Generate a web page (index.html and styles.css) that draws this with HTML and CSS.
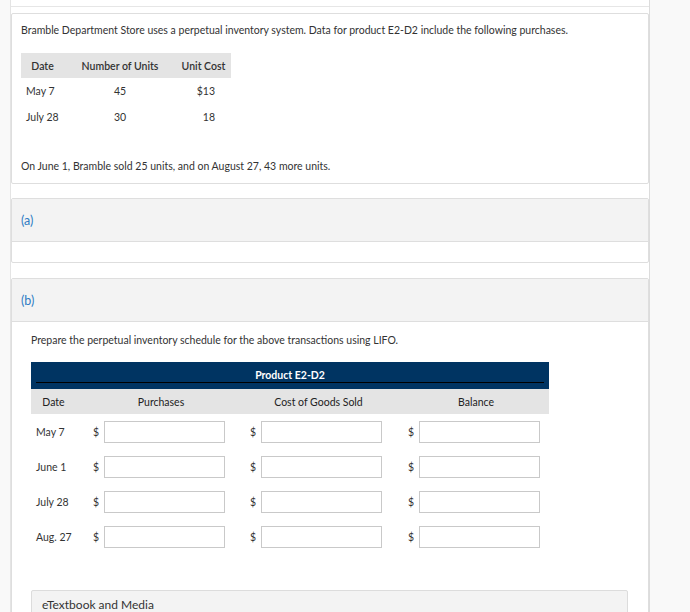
FILE: index.html
```html
<!DOCTYPE html>
<html lang="en">
<head>
<meta charset="utf-8">
<title>Bramble Department Store</title>
<link rel="stylesheet" href="styles.css">
</head>
<body>
<div class="page">
  <div class="topline"></div>

  <div class="card intro">
    <p class="lead">Bramble Department Store uses a perpetual inventory system. Data for product E2-D2 include the following purchases.</p>
    <table class="data">
      <colgroup><col class="w1"><col class="w2"><col class="w3"></colgroup>
      <thead>
        <tr><th class="c-date">Date</th><th class="c-units">Number of Units</th><th class="c-cost">Unit Cost</th></tr>
      </thead>
      <tbody>
        <tr><td class="c-date">May 7</td><td class="c-units">45</td><td class="c-cost">$13</td></tr>
        <tr><td class="c-date">July 28</td><td class="c-units">30</td><td class="c-cost">18</td></tr>
      </tbody>
    </table>
    <p class="note">On June 1, Bramble sold 25 units, and on August 27, 43 more units.</p>
  </div>

  <div class="card part part-a">
    <div class="part-head"><span class="part-label">(a)</span></div>
    <div class="part-body empty"></div>
  </div>

  <div class="card part part-b">
    <div class="part-head"><span class="part-label">(b)</span></div>
    <div class="part-body">
      <p class="prompt">Prepare the perpetual inventory schedule for the above transactions using LIFO.</p>
      <table class="schedule">
        <colgroup>
          <col class="w-date"><col class="w-purch"><col class="w-cogs"><col class="w-bal">
        </colgroup>
        <thead>
          <tr class="title-row"><th colspan="4"><div class="title-inner">Product E2-D2</div></th></tr>
          <tr class="col-row">
            <th class="h-date">Date</th>
            <th class="h-purch">Purchases</th>
            <th class="h-cogs">Cost of Goods Sold</th>
            <th class="h-bal">Balance</th>
          </tr>
        </thead>
        <tbody>
          <tr>
            <td class="d-date">May 7</td>
            <td><div class="money"><span class="cur">$</span><input class="amt" type="text"></div></td>
            <td><div class="money"><span class="cur">$</span><input class="amt" type="text"></div></td>
            <td><div class="money"><span class="cur">$</span><input class="amt" type="text"></div></td>
          </tr>
          <tr>
            <td class="d-date">June 1</td>
            <td><div class="money"><span class="cur">$</span><input class="amt" type="text"></div></td>
            <td><div class="money"><span class="cur">$</span><input class="amt" type="text"></div></td>
            <td><div class="money"><span class="cur">$</span><input class="amt" type="text"></div></td>
          </tr>
          <tr>
            <td class="d-date">July 28</td>
            <td><div class="money"><span class="cur">$</span><input class="amt" type="text"></div></td>
            <td><div class="money"><span class="cur">$</span><input class="amt" type="text"></div></td>
            <td><div class="money"><span class="cur">$</span><input class="amt" type="text"></div></td>
          </tr>
          <tr>
            <td class="d-date">Aug. 27</td>
            <td><div class="money"><span class="cur">$</span><input class="amt" type="text"></div></td>
            <td><div class="money"><span class="cur">$</span><input class="amt" type="text"></div></td>
            <td><div class="money"><span class="cur">$</span><input class="amt" type="text"></div></td>
          </tr>
        </tbody>
      </table>
      <div class="media">eTextbook and Media</div>
    </div>
  </div>
</div>
</body>
</html>
```

FILE: styles.css
```css
html, body {
  margin: 0;
  padding: 0;
}
body {
  background: #f9f9f9;
  font-family: Lato, "Open Sans", "Liberation Sans", sans-serif;
  font-size: 10.5px;
  line-height: 14px;
  color: #333;
  overflow: hidden;
}
.page {
  margin-left: 10px;
  width: 640px;
  min-height: 612px;
  box-sizing: border-box;
  background: #fff;
  border-left: 1px solid #e4e4e4;
  border-right: 1px solid #dcdcdc;
}
.topline {
  height: 6px;
  border-bottom: 1px solid #e6e6e6;
}
.card {
  border: 1px solid #dedede;
  border-radius: 2px;
  background: #fff;
}
.intro {
  margin-top: 6px;
  padding: 9px 9px 10px;
}
.lead, .note, .prompt {
  margin: 0;
}
.data {
  margin-top: 16px;
  width: 210px;
  border-collapse: collapse;
  border-spacing: 0;
  table-layout: fixed;
}
.data .w1 { width: 43px; }
.data .w2 { width: 112px; }
.data .w3 { width: 55px; }
.data th {
  background: #e4e4e4;
  height: 25px;
  padding: 0;
  font-weight: 600;
  color: #333;
  text-align: center;
  white-space: nowrap;
}
.data td {
  height: 26px;
  padding: 0;
  white-space: nowrap;
}
.data .c-units { text-align: center; }
.data td.c-date { padding-left: 5px; text-align: left; }
.data td.c-cost { text-align: right; padding-right: 16px; }
.note {
  margin-top: 29px;
}
.part-a { margin-top: 14px; }
.part-b { margin-top: 15px; }
.part-head {
  background: #f3f3f3;
  border-bottom: 1px solid #dedede;
  height: 43px;
  box-sizing: border-box;
  padding: 14px 9px 0;
}
.part-label {
  font-size: 12.5px;
  line-height: 16px;
  color: #2f7cc4;
}
.empty { height: 20px; }
.part-b .part-body {
  padding: 11px 19px 0;
}
.schedule {
  margin-top: 15px;
  width: 518px;
  border-collapse: collapse;
  border-spacing: 0;
  table-layout: fixed;
}
.w-date { width: 57px; }
.w-purch { width: 157px; }
.w-cogs { width: 158px; }
.w-bal { width: 146px; }
.title-row th {
  background: #003462;
  height: 27px;
  padding: 6px 5px 0;
  box-sizing: border-box;
  vertical-align: top;
}
.title-inner {
  color: #fff;
  font-weight: 700;
  text-align: center;
  line-height: 14px;
  border-bottom: 1px solid #000;
}
.col-row th {
  background: #e4e4e4;
  height: 25px;
  padding: 0;
  font-weight: 400;
  color: #222;
  text-align: center;
  white-space: nowrap;
}
.col-row .h-date { padding-right: 12px; }
.col-row .h-purch { padding-right: 11px; }
.col-row .h-cogs { padding-right: 11px; }
.col-row .h-bal { padding-right: 0; }
.schedule td {
  height: 35px;
  padding: 0 0 0 5px;
  vertical-align: middle;
  white-space: nowrap;
}
.money {
  display: flex;
  align-items: center;
  gap: 5px;
}
.cur {
  color: #333;
}
.amt {
  width: 121px;
  height: 22px;
  box-sizing: border-box;
  border: 1px solid #c9c9c9;
  background: #fff;
  margin: 0;
  padding: 0 4px;
  font: inherit;
}
.media {
  margin-top: 36px;
  width: 597px;
  box-sizing: border-box;
  height: 60px;
  background: #f3f3f3;
  border: 1px solid #dcdcdc;
  border-radius: 2px;
  padding: 6px 10px 0;
  font-size: 12px;
  line-height: 16px;
  color: #333;
}
```
